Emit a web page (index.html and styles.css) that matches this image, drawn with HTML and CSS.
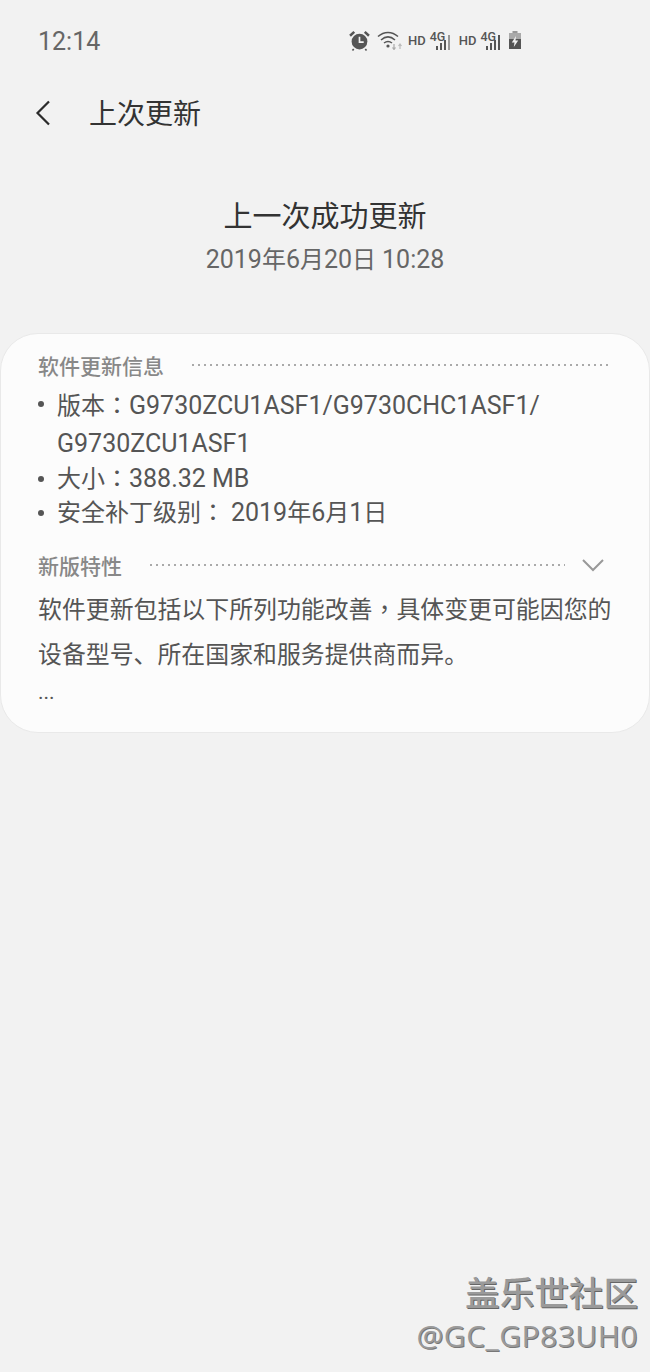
FILE: index.html
```html
<!DOCTYPE html>
<html lang="zh-CN">
  <head>
    <meta charset="UTF-8" />
    <meta name="viewport" content="width=device-width, initial-scale=1.0" />
    <title>上次更新</title>
    <link rel="stylesheet" href="styles.css">
  </head>
  <body>
    <!-- 状态栏 -->
    <div class="status">
      <span class="clock">12:14</span>
      <div class="icons">
        <svg class="ic-alarm" viewBox="0 0 20 20" width="21" height="21">
          <circle cx="10" cy="11" r="7.5" fill="#555"/>
          <path d="M1 5.5 5 1.8 M15 1.8 19 5.5" stroke="#555" stroke-width="2.4" fill="none"/>
          <path d="M4.5 18 3.3 19.5 M15.5 18 16.7 19.5" stroke="#555" stroke-width="1.6"/>
          <path d="M10 6.5V11.5H14" stroke="#f2f2f2" stroke-width="1.6" fill="none"/>
        </svg>
        <svg class="ic-wifi" viewBox="0 0 26 20" width="26" height="20">
          <path d="M1 6.5C7 1 15 1 21 6.5M4 10C8.500 6 13.500 6 18 10M7 13C9.500 11 12.500 11 15 13" stroke="#555" stroke-width="1.500" fill="none"/>
          <circle cx="11" cy="16" r="1.600" fill="#555"/>
          <path d="M17 14V19M15.500 17.500 17 19.500 18.500 17.500" stroke="#aaa" stroke-width="1.200" fill="none"/>
          <path d="M23 19V14.500M21.500 16 23 14 24.500 16" stroke="#bbb" stroke-width="1.200" fill="none"/>
        </svg>
        <span class="hd">HD</span>
        <div class="net">
          <span class="g4">4G</span>
          <svg viewBox="0 0 18 20" width="18" height="20">
            <path d="M2 14h2v4H2zM6 11h2v7H6zM10 8h2v10h-2z" fill="#555"/>
            <path d="M14 3h2v15h-2z" fill="#999"/>
          </svg>
        </div>
        <span class="hd">HD</span>
        <div class="net">
          <span class="g4">4G</span>
          <svg viewBox="0 0 18 20" width="18" height="20">
            <path d="M2 14h2v4H2zM6 11h2v7H6zM10 8h2v10h-2zM14 3h2v15h-2z" fill="#555"/>
          </svg>
        </div>
        <svg class="ic-batt" viewBox="0 0 14 20" width="14" height="20">
          <path d="M4.500 1h5v2h-5z" fill="#999"/>
          <path d="M1 3h12v6H1z" fill="#aaa"/>
          <path d="M1 9h12v10H1z" fill="#555"/>
          <path d="M8 6 3.800 12.500H6.500L5.800 17 10.200 10.500H7.500z" fill="#f2f2f2"/>
        </svg>
      </div>
    </div>

    <header class="topbar">
      <svg class="back" viewBox="0 0 18 28" width="18" height="28">
        <path d="M15 2.500 3.500 14 15 25.500" stroke="#2b2b2b" stroke-width="2.200" fill="none"/>
      </svg>
      <h1>上次更新</h1>
    </header>

    <div class="summary">
      <h2>上一次成功更新</h2>
      <p><span class="en">2019</span>年<span class="en">6</span>月<span class="en">20</span>日 <span class="en">10:28</span></p>
    </div>

    <section class="card">
      <div class="label">
        <h3>软件更新信息</h3>
        <i class="dots"></i>
      </div>
      <ul class="info">
        <li>版本<span class="tc" lang="zh-TW">：</span><span class="en">G9730ZCU1ASF1/G9730CHC1ASF1/</span><br /><span class="en">G9730ZCU1ASF1</span></li>
        <li>大小<span class="tc" lang="zh-TW">：</span><span class="en">388.32 MB</span></li>
        <li>安全补丁级别<span class="tc" lang="zh-TW">：</span> <span class="en">2019</span>年<span class="en">6</span>月<span class="en">1</span>日</li>
      </ul>
      <div class="label second">
        <h3>新版特性</h3>
        <i class="dots"></i>
        <svg class="chev" viewBox="0 0 24 14" width="24" height="14">
          <path d="M2 2 12 12 22 2" stroke="#999" stroke-width="2" fill="none"/>
        </svg>
      </div>
      <p class="desc">软件更新包括以下所列功能改善<span class="tc" lang="zh-TW">，</span>具体变更可能因您的<br />设备型号、所在国家和服务提供商而异。</p>
      <p class="more">...</p>
    </section>

    <div class="mark">
      <strong>盖乐世社区</strong>
      <span>@GC_GP83UH0</span>
    </div>
  </body>
</html>
```
FILE: styles.css
```css
* {
  margin: 0;
  padding: 0;
  box-sizing: border-box;
  list-style: none;
}
html,
body {
  height: 1372px;
  overflow: hidden;
}
body {
  position: relative;
  background-color: #f2f2f2;
  font-family: Roboto, "Noto Sans CJK SC", sans-serif;
  color: #555;
}
.en {
  font-size: 25px;
  line-height: 1;
}
.tc {
  font-family: "Noto Sans CJK TC", sans-serif;
  line-height: 1;
}

/* 状态栏 */
.status {
  height: 82px;
  display: flex;
  align-items: flex-start;
  padding: 28px 0 0 38px;
}
.clock {
  width: 311px;
  font-size: 25px;
  line-height: 28px;
  color: #666;
}
.icons {
  display: flex;
  align-items: center;
  height: 26px;
  margin-top: -1px;
}
.ic-alarm {
  margin-right: 7px;
}
.ic-wifi {
  margin-right: 5px;
}
.hd {
  font-size: 13px;
  font-weight: 500;
  color: #555;
  margin: 1px 4px 0 0;
}
.net {
  position: relative;
  width: 22px;
  height: 20px;
  margin-right: 7px;
}
.net svg {
  position: absolute;
  right: 0;
  top: 2px;
}
.g4 {
  position: absolute;
  left: 0;
  top: -1px;
  font-size: 12.500px;
  font-weight: 500;
}
.ic-batt {
  margin-left: -1px;
}

/* 상단 제목 */
.topbar {
  height: 62px;
  display: flex;
  align-items: center;
  padding-left: 34px;
}
.back {
  margin-right: 37px;
}
.topbar h1 {
  font-size: 28px;
  font-weight: 400;
  color: #333;
  margin-top: -2px;
}

.summary {
  padding-top: 53px;
  text-align: center;
  height: 189px;
}
.summary h2 {
  font-size: 29px;
  line-height: 40px;
  font-weight: 400;
  color: #333;
}
.summary p {
  font-size: 24px;
  line-height: 34px;
  margin-top: 6px;
  color: #666;
}

/* 카드 */
.card {
  height: 400px;
  background-color: #fcfcfc;
  border: 1px solid #e9e9e9;
  border-radius: 38px;
  padding: 16px 38px 0 37px;
}
.label {
  display: flex;
  align-items: center;
  height: 30px;
}
.label h3 {
  font-size: 21px;
  font-weight: 500;
  color: #888;
}
.dots {
  flex: 1;
  height: 2px;
  margin: 0 1px 0 26px;
  background-image: radial-gradient(circle, #aaa 1px, transparent 1.200px);
  background-size: 6px 2px;
}
.info {
  margin-top: 7px;
}
.info li {
  position: relative;
  padding-left: 19px;
  font-size: 24px;
  line-height: 34px;
}
.info li:first-child {
  line-height: 38px;
  margin-bottom: -1px;
}
.info li::before {
  content: "";
  position: absolute;
  left: 0;
  top: 14px;
  width: 6px;
  height: 6px;
  border-radius: 50%;
  background-color: #555;
}
.second {
  margin-top: 20px;
}
.second .dots {
  margin-right: 16px;
}
.chev {
  margin-right: 6px;
}
.desc {
  margin-top: 8px;
  font-size: 23.900px;
  line-height: 45px;
  width: 590px;
}
.more {
  font-size: 21px;
  line-height: 28px;
}

/* 水印 */
.mark {
  position: absolute;
  right: 12px;
  bottom: 16px;
  display: flex;
  flex-direction: column;
  align-items: flex-end;
  color: #9a9a9a;
}
.mark strong {
  font-size: 34.600px;
  line-height: 44px;
  font-weight: 500;
  text-shadow: 1px 1px 0 #666;
}
.mark span {
  font-family: "Open Sans", sans-serif;
  font-size: 30px;
  line-height: 40px;
  letter-spacing: 0.500px;
  text-shadow: 1px 1px 0 #777;
}
```
